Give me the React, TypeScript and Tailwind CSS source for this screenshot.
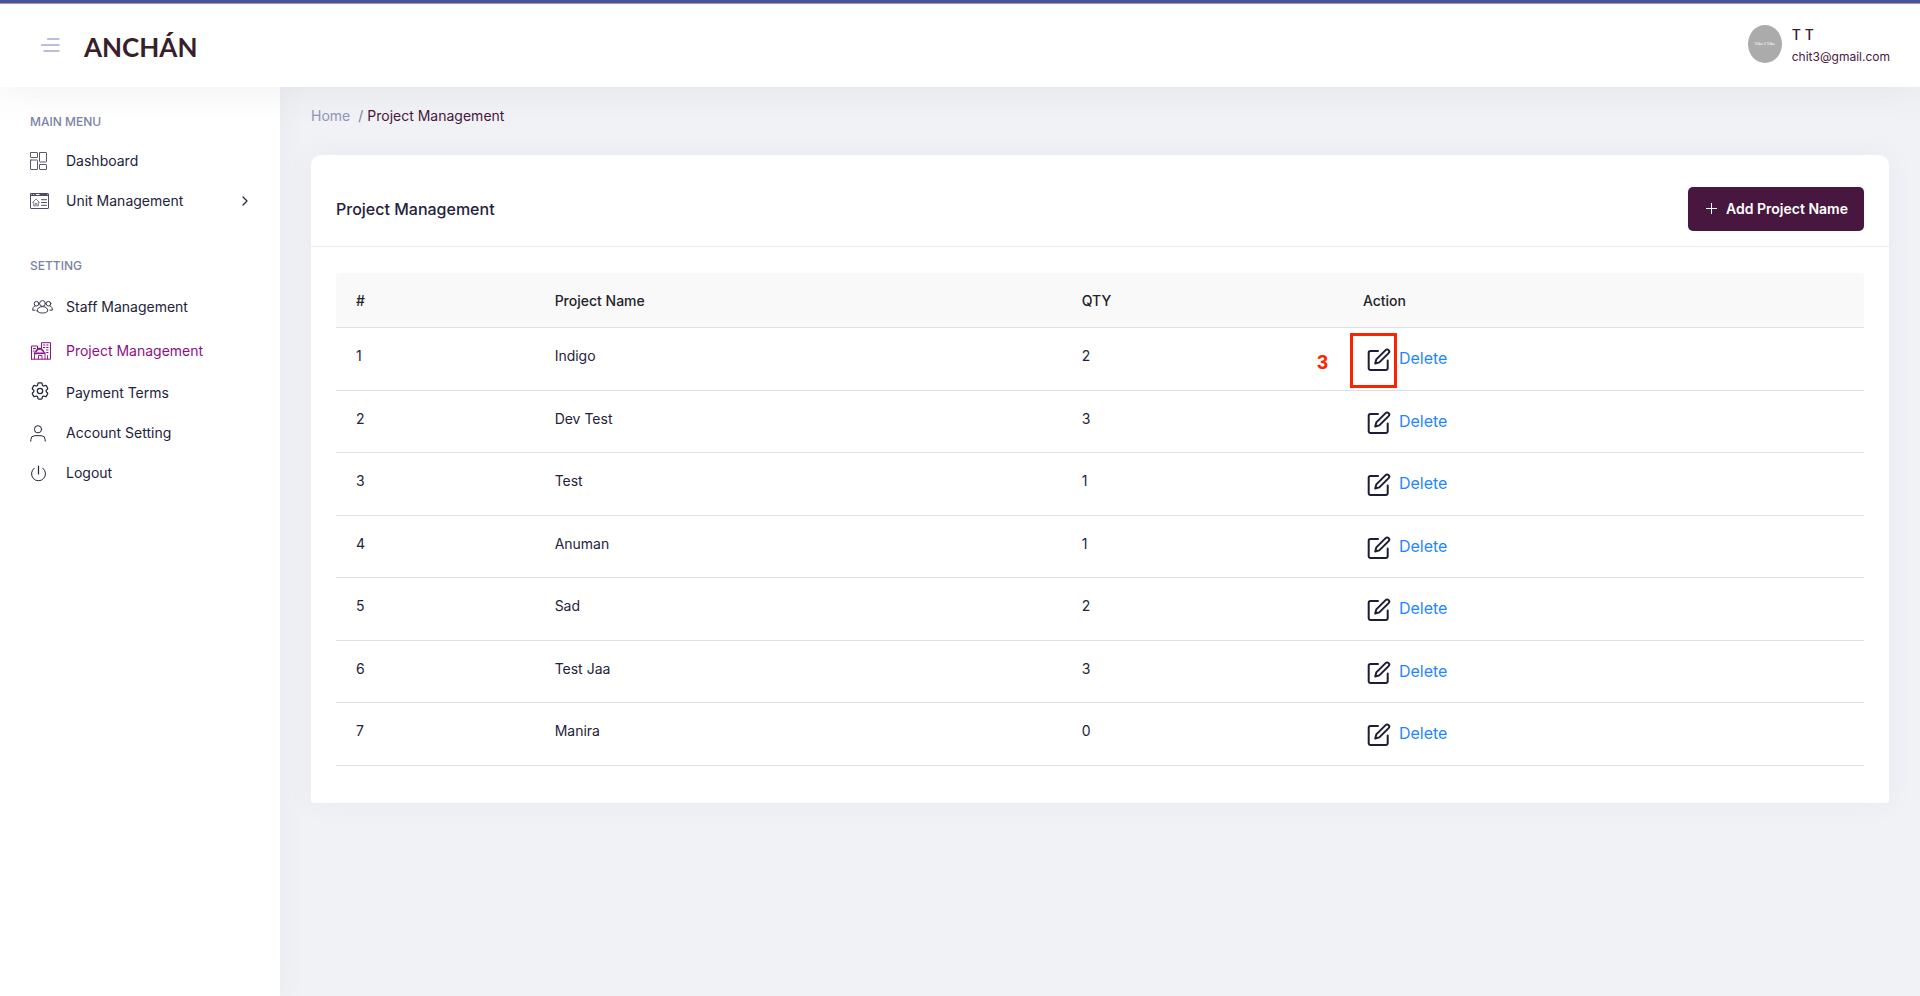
import React from "react";

type IconProps = { children: React.ReactNode; className: string; viewBox: string };

function Icon({ children, className, viewBox }: IconProps) {
  return (
    <svg
      viewBox={viewBox}
      className={className}
      fill="none"
      stroke="currentColor"
      strokeWidth="1"
      strokeLinecap="round"
      strokeLinejoin="round"
      aria-hidden="true"
    >
      {children}
    </svg>
  );
}

const DashboardIcon = () => (
  <Icon viewBox="0 0 18 18" className="h-[18px] w-[18px] opacity-75">
    <rect x="0.5" y="0.5" width="7" height="5" rx="0.5" />
    <rect x="0.5" y="8" width="7" height="9.5" rx="0.5" />
    <rect x="9.5" y="0.5" width="7" height="9.5" rx="0.5" />
    <rect x="9.5" y="12.5" width="7" height="5" rx="0.5" />
  </Icon>
);

const UnitIcon = () => (
  <Icon viewBox="0 0 20 16" className="h-4 w-5 opacity-80">
    <rect x="0.5" y="0.5" width="18" height="15" rx="0.5" />
    <path d="M0.5 2.500h18" />
    <path d="M2 1.500h1M4.500 1.500h1M10 1.500h7" strokeWidth="1.200" />
    <path d="M2.500 9.500L6 6l3.500 3.500M3.800 9v4h1.500v-2.500h1.500V13h1.500V9" strokeWidth="0.700" />
    <path d="M11.500 6.700h5M11.500 9.500h5M11.500 12.300h5" strokeWidth="1" />
  </Icon>
);

const StaffIcon = () => (
  <Icon viewBox="0 0 22 14" className="ml-0.5 h-3.5 w-[22px] opacity-90">
    <circle cx="10.500" cy="3.500" r="2.900" />
    <circle cx="4.500" cy="3.700" r="2.300" />
    <circle cx="16.500" cy="3.700" r="2.300" />
    <path d="M5.200 11c0-2.700 2-4.400 5.300-4.400s5.300 1.700 5.300 4.400c-1 1.500-3 2-5.300 2s-4.300-.5-5.300-2z" />
    <path d="M3 10.200H.7C.6 8 1.300 6.500 3 6M18 10.200h2.300C20.400 8 19.700 6.500 18 6" />
  </Icon>
);

const ProjectIcon = () => (
  <Icon viewBox="0 0 20 18" className="ml-px h-[18px] w-5">
    <path d="M0.500 17.200V4h6v3M10.500 5.500V0.700h9v16.500H0.500" strokeWidth="1" />
    <path d="M3.500 17V11M14 17V10.500M3.500 11.500C4.500 8 6 7.500 8 7.500s4.500.5 5.500 3.500z" strokeWidth="0.900" />
    <path d="M5 9.500l2.500-3h2.500l2.500 3M4.500 11.200h8.500" strokeWidth="1.500" />
    <path d="M7.500 17v-3.500h3.500V17M16.500 17v-3.500" strokeWidth="0.900" />
    <path d="M12.500 3h1.300M15.700 3h1.300M12.500 5.500h1.300M15.700 5.500h1.300M15.700 8h1.300M15.700 10.500h1.300M2.500 6.500h1.800M2.200 9h1" strokeWidth="1.200" />
  </Icon>
);

const GearIcon = () => (
  <Icon viewBox="2 2 20 20" className="ml-px h-[18px] w-[18px] -translate-y-0.5">
    <g strokeWidth="1.400">
      <path d="M9.594 3.940c.090-.542.560-.940 1.110-.940h2.593c.550 0 1.020.398 1.110.940l.213 1.281c.063.374.313.686.645.870.074.040.147.083.220.127.324.196.720.257 1.075.124l1.217-.456a1.125 1.125 0 0 1 1.370.490l1.296 2.247a1.125 1.125 0 0 1-.260 1.431l-1.003.827c-.293.240-.438.613-.431.992a6.759 6.759 0 0 1 0 .255c-.007.378.138.750.430.990l1.005.828c.424.350.534.954.260 1.430l-1.298 2.247a1.125 1.125 0 0 1-1.369.491l-1.217-.456c-.355-.133-.750-.072-1.076.124a6.570 6.570 0 0 1-.220.128c-.331.183-.581.495-.644.869l-.213 1.280c-.090.543-.560.941-1.110.941h-2.594c-.550 0-1.020-.398-1.110-.940l-.213-1.281c-.062-.374-.312-.686-.644-.870a6.520 6.520 0 0 1-.220-.127c-.325-.196-.720-.257-1.076-.124l-1.217.456a1.125 1.125 0 0 1-1.369-.490l-1.297-2.247a1.125 1.125 0 0 1 .260-1.431l1.004-.827c.292-.240.437-.613.430-.992a6.932 6.932 0 0 1 0-.255c.007-.378-.138-.750-.430-.990l-1.004-.828a1.125 1.125 0 0 1-.260-1.430l1.297-2.247a1.125 1.125 0 0 1 1.370-.491l1.216.456c.356.133.751.072 1.076-.124.072-.044.146-.087.220-.128.332-.183.582-.495.644-.869l.214-1.281Z" />
      <circle cx="12" cy="12" r="3" />
    </g>
  </Icon>
);

const UserIcon = () => (
  <Icon viewBox="0 0 16 17" className="h-[17px] w-4">
    <circle cx="8" cy="4.300" r="3.600" />
    <path d="M0.800 16.200v-1.500a4 4 0 0 1 4-4h6.400a4 4 0 0 1 4 4v1.500" />
  </Icon>
);

const PowerIcon = () => (
  <Icon viewBox="0 0 16 17" className="h-[17px] w-4">
    <path d="M8.500 1v8" strokeWidth="1.200" />
    <path d="M4.200 3.200a7 7 0 1 0 8.600 0" />
  </Icon>
);

const EditIcon = () => (
  <svg viewBox="0 0 24 24" className="h-6 w-6" fill="none" stroke="#1d1d35" strokeWidth="2" strokeLinecap="round" strokeLinejoin="round" aria-hidden="true">
    <path d="M11 3H3.500A1.800 1.800 0 0 0 1.700 4.800v15.400A1.800 1.800 0 0 0 3.500 22h15.400a1.800 1.800 0 0 0 1.800-1.800V12.500" />
    <path d="M18.600 2.100a2.100 2.100 0 0 1 3 3L12.300 14.400l-4.100 1.100 1.100-4.100z" />
  </svg>
);

type NavItem = { label: string; icon: React.ReactNode; tall?: boolean; active?: boolean; expandable?: boolean };

const mainMenu: NavItem[] = [
  { label: "Dashboard", icon: <DashboardIcon /> },
  { label: "Unit Management", icon: <UnitIcon />, expandable: true },
];

const settingMenu: NavItem[] = [
  { label: "Staff Management", icon: <StaffIcon />, tall: true },
  { label: "Project Management", icon: <ProjectIcon />, tall: true, active: true },
  { label: "Payment Terms", icon: <GearIcon /> },
  { label: "Account Setting", icon: <UserIcon /> },
  { label: "Logout", icon: <PowerIcon /> },
];

function NavGroup({ title, items }: { title: string; items: NavItem[] }) {
  return (
    <section>
      <h2 className="flex h-10 items-center pt-0.5 text-xs font-medium text-[#7b82a8]">{title}</h2>
      <ul>
        {items.map((item) => (
          <li key={item.label}>
            <a
              href="#"
              aria-current={item.active ? "page" : undefined}
              className={`flex items-center text-sm ${item.tall ? "h-11" : "h-10"} ${item.active ? "text-[#8e0f85]" : "text-[#23233b]"}`}
            >
              <span className="flex w-9 shrink-0 items-center">{item.icon}</span>
              <span className="grow">{item.label}</span>
              {item.expandable && (
                <Icon viewBox="0 0 6 10" className="h-2.5 w-1.5">
                  <path d="M1 1l4 4-4 4" strokeWidth="1.200" />
                </Icon>
              )}
            </a>
          </li>
        ))}
      </ul>
    </section>
  );
}

const projects = [
  { name: "Indigo", qty: 2 },
  { name: "Dev Test", qty: 3 },
  { name: "Test", qty: 1 },
  { name: "Anuman", qty: 1 },
  { name: "Sad", qty: 2 },
  { name: "Test Jaa", qty: 3 },
  { name: "Manira", qty: 0 },
];

const headings = ["#", "Project Name", "QTY", "Action"];

export default function App() {
  return (
    <div className="flex min-h-screen flex-col bg-[#f1f2f6] font-['Inter',sans-serif] text-[#23233b]">
      <header className="relative z-20 flex h-[87px] shrink-0 items-center justify-between border-t-3 border-[#4256a0] bg-white pr-[30px] pl-10 shadow-[0_0_40px_rgba(82,85,92,0.1)]">
        <div className="absolute inset-x-0 top-0 h-px bg-[#c98d8d]" />
        <div className="flex items-center gap-6">
          <button type="button" aria-label="Toggle menu" className="text-[#a3abd0]">
            <svg viewBox="0 0 20 14" className="h-3.5 w-5" stroke="currentColor" strokeWidth="1.300" strokeLinecap="round" aria-hidden="true">
              <path d="M7.500 1H19M1.500 7H19M4 13H19" />
            </svg>
          </button>
          <a href="#" className="pt-1 font-['Lato',sans-serif] text-[26px] leading-8 font-bold text-[#38202a]">ANCHÁN</a>
        </div>
        <div className="flex items-start gap-2.5 pt-1">
          <div className="flex h-[38px] w-[34px] items-center justify-center rounded-[50%] bg-[#ababab] text-[3px] text-white">128px X 128px</div>
          <div className="flex flex-col">
            <span className="text-sm leading-5 font-medium text-[#38202a]">T T</span>
            <span className="text-xs leading-6 text-[#47173f]">chit3@gmail.com</span>
          </div>
        </div>
      </header>

      <div className="flex grow">
        <nav aria-label="Main" className="z-10 flex w-[280px] shrink-0 flex-col gap-6 bg-white pt-3.5 pr-8 pl-[30px] shadow-[0_0_30px_rgba(82,85,120,0.06)]">
          <NavGroup title="MAIN MENU" items={mainMenu} />
          <NavGroup title="SETTING" items={settingMenu} />
        </nav>

        <main className="min-w-0 grow pt-[19px] pr-[31px] pb-8 pl-[31px]">
          <nav aria-label="Breadcrumb" className="flex h-5 items-center text-sm">
            <a href="#" className="mr-2 text-[#8f96bb]">Home</a>
            <span className="mr-1 text-[#7b82a0]">/</span>
            <span className="text-[#47173f]">Project Management</span>
          </nav>

          <section className="mt-[29px] rounded-t-[10px] rounded-b-[3px] bg-white pb-[37px] shadow-[0_0_30px_rgba(82,85,120,0.05)]">
            <div className="flex items-center justify-between border-b border-[#ebebf0] px-[25px] pt-8 pb-[15px]">
              <h1 className="text-base font-medium">Project Management</h1>
              <button type="button" className="flex h-11 items-center gap-2 rounded-[5px] bg-[#47173f] px-4 text-sm font-semibold text-white">
                <svg viewBox="0 0 14 14" className="h-3.5 w-3.5" stroke="currentColor" strokeWidth="1" aria-hidden="true">
                  <path d="M7.500 1v11M2 6.500h11" />
                </svg>
                Add Project Name
              </button>
            </div>

            <div className="px-[25px] pt-[26px]">
              <table className="w-full table-fixed border-separate border-spacing-0 text-left text-sm">
                <colgroup>
                  <col className="w-[13%]" />
                  <col className="w-[34.5%]" />
                  <col className="w-[18.4%]" />
                  <col className="w-[34.1%]" />
                </colgroup>
                <thead className="text-[#232329]">
                  <tr className="h-[55px]">
                    {headings.map((heading) => (
                      <th key={heading} scope="col" className="border-b border-[#dedee9] bg-[#f9f9f9] px-5 pt-0.5 font-medium first:rounded-tl last:rounded-tr">
                        {heading}
                      </th>
                    ))}
                  </tr>
                </thead>
                <tbody>
                  {projects.map((project, index) => (
                    <tr key={project.name} className="align-top odd:h-[63px] even:h-[62px]">
                      <td className="border-b border-[#dedee9] px-5 pt-[18px]">{index + 1}</td>
                      <td className="border-b border-[#dedee9] px-5 pt-[18px]">{project.name}</td>
                      <td className="border-b border-[#dedee9] px-5 pt-[18px]">{project.qty}</td>
                      <td className="border-b border-[#dedee9] px-5 pt-[18px]">
                        <div className="flex items-start gap-2 pl-1">
                          <div className="relative pt-0.5">
                            <button type="button" aria-label={`Edit ${project.name}`} className="block">
                              <EditIcon />
                            </button>
                            {index === 0 && (
                              <>
                                <span className="absolute -top-[13px] -left-[17px] h-[55px] w-[47px] border-3 border-[#fb2400]" />
                                <strong className="absolute top-1 -left-[50px] font-['Liberation_Sans',sans-serif] text-xl leading-6 font-bold text-[#fb2400]">3</strong>
                              </>
                            )}
                          </div>
                          <a href="#" className="text-base leading-6 text-[#1f86ff]">Delete</a>
                        </div>
                      </td>
                    </tr>
                  ))}
                </tbody>
              </table>
            </div>
          </section>
        </main>
      </div>
    </div>
  );
}
